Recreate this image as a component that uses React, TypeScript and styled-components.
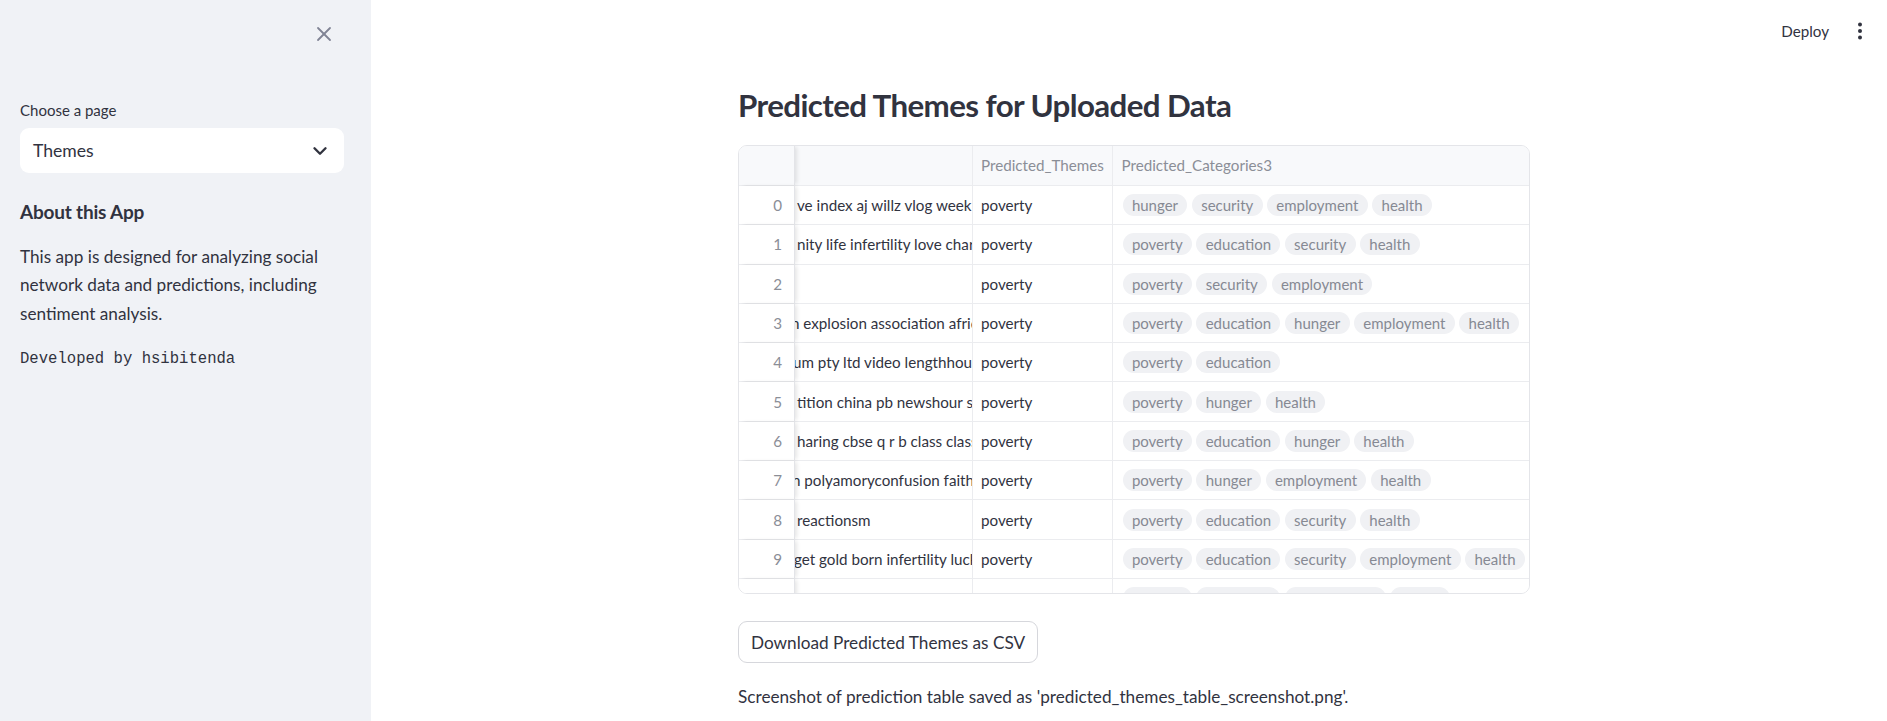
import React from "react";
import styled, { createGlobalStyle } from "styled-components";
import { X, ChevronDown } from "lucide-react";

const GlobalStyle = createGlobalStyle`
  html, body { margin: 0; padding: 0; background: #ffffff; }
  body {
    font-family: Lato, "Noto Sans", "Liberation Sans", sans-serif;
    color: #31333f;
    -webkit-font-smoothing: antialiased;
  }
  * { box-sizing: border-box; }
`;

const Page = styled.div`
  display: flex;
  width: 100%;
  height: 721px;
  overflow: hidden;
`;

const Sidebar = styled.aside`
  width: 371px;
  flex: 0 0 371px;
  background: #f0f2f6;
  padding: 0 27px 0 20px;
  display: flex;
  flex-direction: column;
`;

const SidebarTop = styled.div`
  height: 68px;
  display: flex;
  align-items: center;
  justify-content: flex-end;
`;

const CloseButton = styled.button`
  border: none;
  background: transparent;
  padding: 0;
  margin-right: 8px;
  width: 24px;
  height: 24px;
  display: flex;
  align-items: center;
  justify-content: center;
  color: #808495;
  cursor: pointer;
`;

const FieldLabel = styled.label`
  margin-top: 32px;
  font-size: 15px;
  line-height: 20px;
  color: #31333f;
`;

const SelectBox = styled.div`
  margin-top: 8px;
  height: 45px;
  background: #ffffff;
  border-radius: 9px;
  padding: 0 13px 0 13px;
  display: flex;
  align-items: center;
  justify-content: space-between;
  font-size: 17.6px;
  color: #31333f;
`;

const SideHeading = styled.h3`
  margin: 25px 0 0 0;
  font-size: 19px;
  line-height: 28px;
  font-weight: 700;
  letter-spacing: -0.2px;
  color: #31333f;
`;

const SideText = styled.p`
  margin: 16.5px 0 0 0;
  font-size: 17.2px;
  line-height: 28.5px;
  color: #31333f;
`;

const MonoText = styled.code`
  display: block;
  margin-top: 19px;
  font-family: "Liberation Mono", "DejaVu Sans Mono", monospace;
  font-size: 15.6px;
  line-height: 24px;
  color: #31333f;
`;

const Main = styled.main`
  flex: 1;
  display: flex;
  flex-direction: column;
  min-width: 0;
`;

const Toolbar = styled.header`
  height: 62px;
  display: flex;
  align-items: center;
  justify-content: flex-end;
  gap: 19px;
  padding-right: 15px;
`;

const DeployLink = styled.span`
  font-size: 15.2px;
  color: #31333f;
`;

const ContentWrap = styled.div`
  padding-left: 10px;
  display: flex;
  justify-content: center;
`;

const Content = styled.section`
  width: 792px;
  display: flex;
  flex-direction: column;
  align-items: flex-start;
`;

const Title = styled.h2`
  margin: 21px 0 0 0;
  font-size: 31.3px;
  line-height: 44px;
  font-weight: 700;
  color: #31333f;
  letter-spacing: -0.6px;
`;

const Table = styled.div`
  margin-top: 17.5px;
  width: 100%;
  height: 449px;
  border: 1px solid #e4e5e9;
  border-radius: 9px;
  overflow: hidden;
  display: flex;
  flex-direction: column;
  font-size: 15.2px;
`;

const Row = styled.div<{ $header?: boolean }>`
  flex: 0 0 ${(p) => (p.$header ? "40.5px" : "39.3px")};
  display: grid;
  grid-template-columns: 56px 177.5px 140.5px 1fr;
  border-bottom: 1px solid #ebecef;
  background: ${(p) => (p.$header ? "#f8f9fb" : "#ffffff")};
`;

const Cell = styled.div<{ $last?: boolean }>`
  display: flex;
  align-items: center;
  min-width: 0;
  overflow: hidden;
  white-space: nowrap;
  border-right: ${(p) => (p.$last ? "none" : "1px solid #ebecef")};
  padding-left: 8.5px;
`;

const HeaderCell = styled(Cell)`
  color: #8b8e97;
`;

const IndexCell = styled.div<{ $header?: boolean }>`
  position: relative;
  z-index: 1;
  display: flex;
  align-items: center;
  justify-content: flex-end;
  padding-right: 12px;
  color: #8b8e97;
  background: ${(p) => (p.$header ? "#f8f9fb" : "#ffffff")};
  border-right: 1px solid #e3e4e8;
  box-shadow: 3px 0 4px -1px rgba(0, 0, 0, 0.1);
`;

const TextCell = styled(Cell)`
  padding-left: 2px;
  color: #31333f;
`;

const Shifted = styled.span<{ $shift: number }>`
  margin-left: ${(p) => p.$shift}px;
`;

const PillCell = styled(Cell)`
  padding-left: 9.5px;
  gap: 4.3px;
`;

const Pill = styled.span`
  height: 22px;
  padding: 0 9.4px;
  border-radius: 11px;
  background: #f0f1f4;
  color: #868993;
  display: inline-flex;
  align-items: center;
  font-size: 15px;
  flex: 0 0 auto;
`;

const DownloadButton = styled.button`
  margin-top: 27.5px;
  height: 42px;
  padding: 0 12px;
  border: 1px solid #d6d7dc;
  border-radius: 9px;
  background: #ffffff;
  font-family: inherit;
  font-size: 17.2px;
  color: #31333f;
  cursor: pointer;
`;

const Note = styled.p`
  margin: 20px 0 0 0;
  font-size: 17.2px;
  line-height: 28px;
  color: #31333f;
`;

const rows: { text: string; shift: number; cats: string[] }[] = [
  { text: "ve index aj willz vlog week vlog", shift: 0, cats: ["hunger", "security", "employment", "health"] },
  { text: "nity life infertility love charm", shift: 0, cats: ["poverty", "education", "security", "health"] },
  { text: "", shift: 0, cats: ["poverty", "security", "employment"] },
  { text: "n explosion association africa", shift: -6, cats: ["poverty", "education", "hunger", "employment", "health"] },
  { text: "um pty ltd video lengthhour", shift: -4, cats: ["poverty", "education"] },
  { text: "tition china pb newshour st", shift: 0, cats: ["poverty", "hunger", "health"] },
  { text: "haring cbse q r b class class", shift: 0, cats: ["poverty", "education", "hunger", "health"] },
  { text: "n polyamoryconfusion faith", shift: -5, cats: ["poverty", "hunger", "employment", "health"] },
  { text: " reactionsm", shift: 0, cats: ["poverty", "education", "security", "health"] },
  { text: "get gold born infertility luck", shift: -3, cats: ["poverty", "education", "security", "employment", "health"] },
  { text: "", shift: 0, cats: ["poverty", "education", "employment", "health"] },
];

function Kebab() {
  return (
    <svg width="24" height="24" viewBox="0 0 24 24" fill="#31333f" aria-hidden>
      <circle cx="12" cy="5.5" r="2" />
      <circle cx="12" cy="12" r="2" />
      <circle cx="12" cy="18.5" r="2" />
    </svg>
  );
}

export default function App() {
  return (
    <>
      <GlobalStyle />
      <Page>
        <Sidebar>
          <SidebarTop>
            <CloseButton aria-label="Close sidebar">
              <X size={24} strokeWidth={1.8} />
            </CloseButton>
          </SidebarTop>
          <FieldLabel>Choose a page</FieldLabel>
          <SelectBox>
            <span>Themes</span>
            <ChevronDown size={22} strokeWidth={2.6} color="#31333f" />
          </SelectBox>
          <SideHeading>About this App</SideHeading>
          <SideText>
            This app is designed for analyzing social network data and predictions, including sentiment analysis.
          </SideText>
          <MonoText>Developed by hsibitenda</MonoText>
        </Sidebar>
        <Main>
          <Toolbar>
            <DeployLink>Deploy</DeployLink>
            <Kebab />
          </Toolbar>
          <ContentWrap>
            <Content>
              <Title>Predicted Themes for Uploaded Data</Title>
              <Table>
                <Row $header>
                  <IndexCell $header />
                  <HeaderCell />
                  <HeaderCell>Predicted_Themes</HeaderCell>
                  <HeaderCell $last>Predicted_Categories3</HeaderCell>
                </Row>
                {rows.map((r, i) => (
                  <Row key={i}>
                    <IndexCell>{i < 10 ? i : ""}</IndexCell>
                    <TextCell>
                      <Shifted $shift={r.shift}>{r.text}</Shifted>
                    </TextCell>
                    <Cell>{i < 10 ? "poverty" : ""}</Cell>
                    <PillCell $last>
                      {r.cats.map((c, j) => (
                        <Pill key={j}>{c}</Pill>
                      ))}
                    </PillCell>
                  </Row>
                ))}
              </Table>
              <DownloadButton>Download Predicted Themes as CSV</DownloadButton>
              <Note>Screenshot of prediction table saved as 'predicted_themes_table_screenshot.png'.</Note>
            </Content>
          </ContentWrap>
        </Main>
      </Page>
    </>
  );
}
